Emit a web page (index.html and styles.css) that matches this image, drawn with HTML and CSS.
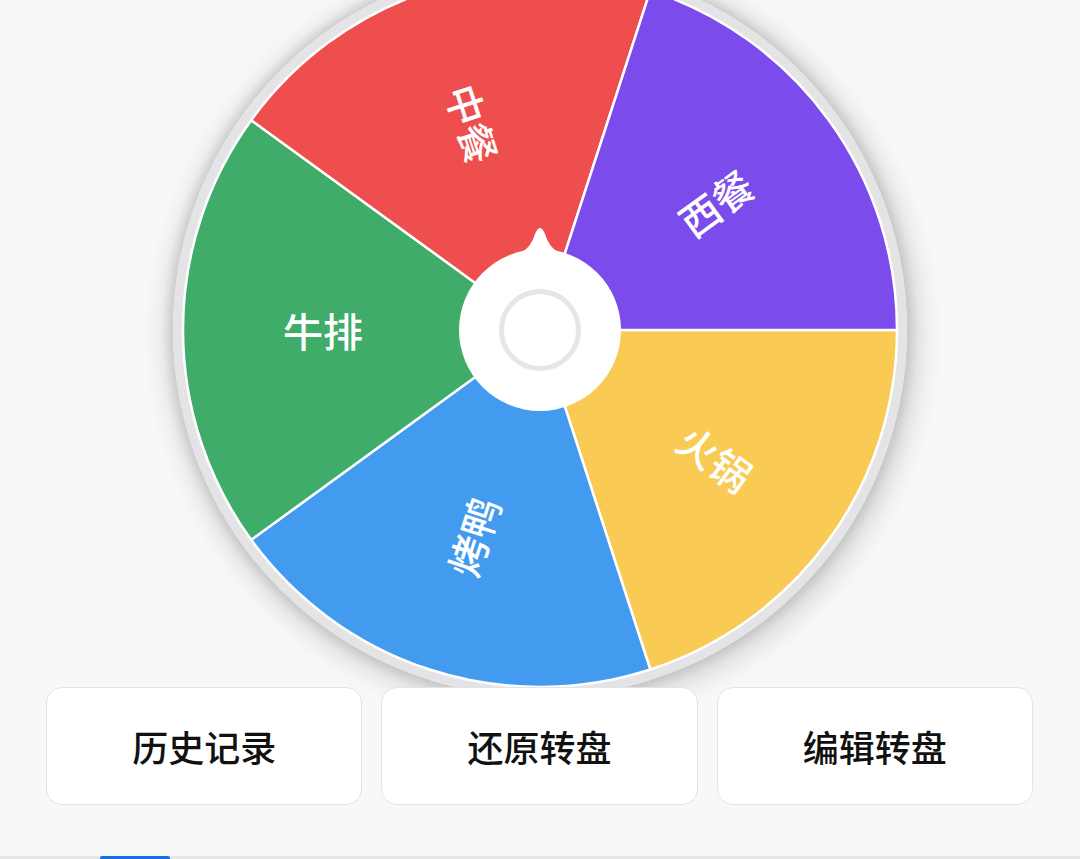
FILE: index.html
```html
<!DOCTYPE html>
<html lang="zh-CN">
<head>
    <meta charset="UTF-8">
    <title>转盘</title>
    <link rel="stylesheet" href="styles.css">
</head>
<body>
<div class="wheel-area">
    <div class="wheel">
        <svg class="wheel-svg" viewBox="-367 -367 734 734" width="734" height="734">
            <circle cx="0" cy="0" r="367" fill="#e4e4e6"/>
            <g class="slices">
                <path fill="#f9cb55" d="M0 0 L357 0 A357 357 0 0 1 110.32 339.53 Z"/>
                <path fill="#439bef" d="M0 0 L110.32 339.53 A357 357 0 0 1 -288.82 209.84 Z"/>
                <path fill="#3fad69" d="M0 0 L-288.82 209.84 A357 357 0 0 1 -288.82 -209.84 Z"/>
                <path fill="#ef4e4e" d="M0 0 L-288.82 -209.84 A357 357 0 0 1 110.32 -339.53 Z"/>
                <path fill="#7b4beb" d="M0 0 L110.32 -339.53 A357 357 0 0 1 357 0 Z"/>
            </g>
            <g class="labels">
                <text transform="translate(-217 0)">牛排</text>
                <text transform="translate(-67.06 -206.38) rotate(72)">中餐</text>
                <text transform="translate(175.56 -127.55) rotate(-36)">西餐</text>
                <text transform="translate(175.56 127.55) rotate(36)">火锅</text>
                <text transform="translate(-67.06 206.38) rotate(-72)">烤鸭</text>
            </g>
            <!-- pointer -->
            <path fill="#ffffff" d="M-20 -77 Q-9 -82 -5 -96 Q0 -108 5 -96 Q9 -82 20 -77 Z"/>
            <circle cx="0" cy="0" r="81" fill="#ffffff"/>
            <circle cx="0" cy="0" r="38.5" fill="#ffffff" stroke="#e6e6e6" stroke-width="5"/>
        </svg>
    </div>
</div>
<div class="actions">
    <button class="action">历史记录</button>
    <button class="action">还原转盘</button>
    <button class="action">编辑转盘</button>
</div>
<div class="tabbar">
    <span class="tab-indicator"></span>
</div>
</body>
</html>
```

FILE: styles.css
```css
* {
    box-sizing: border-box;
}
html {
    margin: 0;
    padding: 0;
}
body {
    margin: 0;
    height: 100vh;
    overflow: hidden;
    background-color: #f8f8f8;
    font-family: "Noto Sans CJK SC", "Noto Sans", sans-serif;
    display: flex;
    flex-direction: column;
}

.wheel-area {
    display: flex;
    justify-content: center;
    margin-top: -37px;
}
.wheel {
    width: 734px;
    height: 734px;
    border-radius: 50%;
    box-shadow: 0 0 8px 5px rgba(0, 0, 0, 0.09), 3px 5px 26px 10px rgba(0, 0, 0, 0.14);
}
.wheel-svg {
    display: block;
}
.slices path {
    stroke: #ffffff;
    stroke-width: 2.5;
    stroke-linejoin: round;
}
.labels text {
    fill: #ffffff;
    font-family: "Noto Sans CJK SC", sans-serif;
    font-size: 40px;
    font-weight: 500;
    text-anchor: middle;
    dominant-baseline: central;
}

.actions {
    position: relative;
    display: flex;
    gap: 19px;
    padding: 0 47px 0 46px;
    margin-top: -10px;
}
.action {
    flex: 1;
    height: 118px;
    background-color: #ffffff;
    border: 1.5px solid #e3e3e3;
    border-radius: 16px;
    font-family: "Noto Sans CJK SC", sans-serif;
    font-size: 36px;
    font-weight: 500;
    color: #111111;
    cursor: pointer;
}

.tabbar {
    margin-top: auto;
    height: 3px;
    background-color: #e6e6e6;
    position: relative;
}
.tab-indicator {
    position: absolute;
    left: 100px;
    top: 0;
    width: 70px;
    height: 3px;
    border-radius: 2px 2px 0 0;
    background-color: #1a6fe3;
}
```
